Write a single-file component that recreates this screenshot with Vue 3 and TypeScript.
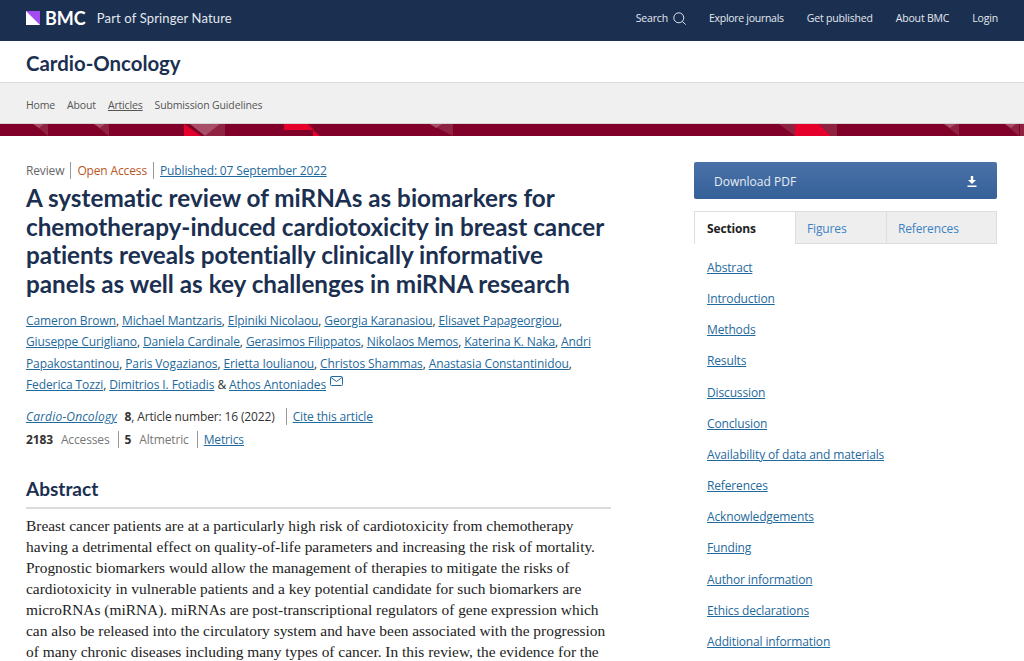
<template>
  <div class="page">
    <header class="topbar">
      <div class="brand">
        <svg class="logo" width="14" height="14" viewBox="0 0 14 14">
          <rect width="14" height="14" fill="#a24bf0" />
          <polygon points="0,0 14,14 0,14" fill="#fff" />
        </svg>
        <span class="bmc">BMC</span>
        <span class="part">Part of Springer Nature</span>
      </div>
      <nav class="topnav">
        <a class="search">Search
          <svg width="13" height="13" viewBox="0 0 13 13" fill="none" stroke="#dfe5ec" stroke-width="1">
            <circle cx="5.8" cy="5.8" r="5" />
            <path d="M9.4 9.4 12.6 12.6" />
          </svg>
        </a>
        <a class="explore">Explore journals</a>
        <a>Get published</a>
        <a>About BMC</a>
        <a>Login</a>
      </nav>
    </header>

    <div class="journal">Cardio-Oncology</div>

    <nav class="subnav">
      <a>Home</a>
      <a>About</a>
      <a class="current">Articles</a>
      <a>Submission Guidelines</a>
    </nav>

    <div class="strip">
      <svg width="1024" height="12" viewBox="0 0 1024 12">
        <polygon v-for="(p, i) in stripShapes" :key="i" :points="p.points" :fill="p.fill" />
      </svg>
    </div>

    <main class="content">
      <article class="article">
        <div class="meta-top">
          <span class="type">Review</span>
          <span class="oa">Open Access</span>
          <a class="link">Published: 07 September 2022</a>
        </div>
        <h1>A systematic review of miRNAs as biomarkers for chemotherapy-induced cardiotoxicity in breast cancer patients reveals potentially clinically informative panels as well as key challenges in miRNA research</h1>
        <p class="authors">
          <template v-for="(a, i) in authors" :key="a">
            <a class="link">{{ a }}</a><span v-if="i < authors.length - 2">, </span><span v-else-if="i === authors.length - 2"> &amp; </span>
          </template>
          <svg class="mail" width="13" height="10" viewBox="0 0 13 10" fill="none" stroke="#1f6a9c" stroke-width="1">
            <rect x="0.5" y="0.5" width="12" height="9" rx="1" />
            <path d="M1 1.5 6.5 5.5 12 1.5" />
          </svg>
        </p>
        <div class="cite">
          <span><a class="link italic">Cardio-Oncology</a><b class="vol">8</b>, Article number: 16 (2022)</span>
          <a class="link">Cite this article</a>
        </div>
        <div class="metrics">
          <span><b>2183</b><i>Accesses</i></span>
          <span><b>5</b><i>Altmetric</i></span>
          <a class="link">Metrics</a>
        </div>
        <h2>Abstract</h2>
        <p class="abstract">Breast cancer patients are at a particularly high risk of cardiotoxicity from chemotherapy having a detrimental effect on quality-of-life parameters and increasing the risk of mortality. Prognostic biomarkers would allow the management of therapies to mitigate the risks of cardiotoxicity in vulnerable patients and a key potential candidate for such biomarkers are microRNAs (miRNA). miRNAs are post-transcriptional regulators of gene expression which can also be released into the circulatory system and have been associated with the progression of many chronic diseases including many types of cancer. In this review, the evidence for the</p>
      </article>

      <aside class="side">
        <a class="pdf">Download PDF
          <svg width="10" height="11" viewBox="0 0 10 11" fill="#fff">
            <path d="M3.8 0h2.4v4H9L5 8 1 4h2.8zM0.5 9.5h9V11h-9z" />
          </svg>
        </a>
        <div class="tabs">
          <div class="tab active">Sections</div>
          <div class="tab figures">Figures</div>
          <div class="tab refs">References</div>
        </div>
        <ul class="sections">
          <li v-for="s in sections" :key="s"><a class="link">{{ s }}</a></li>
        </ul>
      </aside>
    </main>
  </div>
</template>

<script setup lang="ts">
const authors: string[] = [
  'Cameron Brown', 'Michael Mantzaris', 'Elpiniki Nicolaou', 'Georgia Karanasiou', 'Elisavet Papageorgiou',
  'Giuseppe Curigliano', 'Daniela Cardinale', 'Gerasimos Filippatos', 'Nikolaos Memos', 'Katerina K. Naka',
  'Andri Papakostantinou', 'Paris Vogazianos', 'Erietta Ioulianou', 'Christos Shammas', 'Anastasia Constantinidou',
  'Federica Tozzi', 'Dimitrios I. Fotiadis', 'Athos Antoniades'
]

const sections: string[] = [
  'Abstract', 'Introduction', 'Methods', 'Results', 'Discussion', 'Conclusion',
  'Availability of data and materials', 'References', 'Acknowledgements', 'Funding',
  'Author information', 'Ethics declarations', 'Additional information'
]

const light = '#8f2141'
const red = '#e4002b'
const pale = '#a84e68'

const stripShapes = [
  { points: '34,0 48,0 48,12', fill: light },
  { points: '33,0 44,0 39,4', fill: pale },
  { points: '94,0 109,0 109,12', fill: light },
  { points: '94,0 105,0 100,4', fill: pale },
  { points: '184,0 184,12 201,12', fill: red },
  { points: '220,0 225,0 225,12 205,12', fill: light },
  { points: '190,0 220,0 205,12', fill: pale },
  { points: '284,0 308,0 314,6 284,6', fill: red },
  { points: '313,6 320,12 313,12', fill: red },
  { points: '430,0 453,0 453,12', fill: light },
  { points: '430,0 442,0 436,4', fill: pale },
  { points: '779,0 795,0 795,12', fill: light },
  { points: '795,0 819,0 831,12 795,12', fill: red },
  { points: '819,0 837,0 837,12 831,12', fill: light },
  { points: '944,0 959,0 959,12', fill: light },
  { points: '944,0 956,0 950,4', fill: pale },
  { points: '1005,0 1019,0 1019,12', fill: light },
  { points: '1005,0 1016,0 1011,4', fill: pale },
  { points: '1020,0 1024,0 1024,12 1020,12', fill: light }
]
</script>

<style scoped>
.page {
  width: 1024px;
  height: 661px;
  overflow: hidden;
  background: #fff;
  font-family: "Open Sans", "Liberation Sans", sans-serif;
  color: #333;
}

.topbar {
  height: 41px;
  background: #1b3051;
  color: #e3e8ee;
  display: flex;
  align-items: center;
  justify-content: space-between;
  padding: 0 26px 5px;
  box-sizing: border-box;
  font-size: 10.5px;
  letter-spacing: -0.18px;
}

.brand {
  display: flex;
  align-items: center;
  letter-spacing: 0;
}

.logo {
  margin-right: 5px;
}

.bmc {
  font-family: Lato, sans-serif;
  font-weight: 700;
  font-size: 18px;
  color: #fff;
  margin-right: 11px;
}

.part {
  font-family: Lato, sans-serif;
  font-size: 13px;
  letter-spacing: 0.15px;
}

.topnav {
  display: flex;
  align-items: center;
  gap: 23px;
}

.search {
  display: flex;
  align-items: center;
  gap: 5px;
}

.explore {
  letter-spacing: -0.28px;
}

.journal {
  height: 42px;
  box-sizing: border-box;
  padding: 10px 26px 0;
  font-family: Lato, sans-serif;
  font-weight: 700;
  font-size: 20.4px;
  color: #1b3051;
  border-bottom: 1px solid #dcdcdc;
}

.subnav {
  height: 41px;
  background: #f0f0f0;
  display: flex;
  align-items: center;
  gap: 12px;
  padding: 4px 26px 0;
  font-size: 10.5px;
  letter-spacing: -0.15px;
  color: #555;
  border-bottom: 1px solid #d5d5d5;
  box-sizing: border-box;
}

.current {
  text-decoration: underline;
}

.strip {
  height: 12px;
  background: #800029;
  line-height: 0;
}

.content {
  display: flex;
  padding: 26px 26px 0;
  font-size: 12px;
  letter-spacing: -0.14px;
}

.article {
  width: 585px;
  margin-right: 83px;
}

.side {
  width: 303px;
}

.link {
  color: #1f6a9c;
  text-decoration: underline;
}

.italic {
  font-style: italic;
  letter-spacing: 0.18px;
}

.vol {
  margin-left: 7.5px;
}

.meta-top {
  display: flex;
  align-items: center;
  line-height: 17px;
}

.type {
  color: #666;
  padding-right: 6px;
  border-right: 1px solid #999;
}

.oa {
  color: #b8561f;
  padding: 0 6px;
  border-right: 1px solid #999;
  margin-right: 6px;
}

h1 {
  font-family: Lato, sans-serif;
  font-variant-ligatures: none;
  font-weight: 700;
  font-size: 24.25px;
  line-height: 28.5px;
  letter-spacing: 0;
  color: #1b3051;
  margin: 5px 0 12px;
}

.authors {
  line-height: 21.3px;
  letter-spacing: -0.1px;
  margin: 0 0 13px;
}

.mail {
  margin-left: 4px;
  vertical-align: 3px;
}

.cite,
.metrics {
  display: flex;
  line-height: 17px;
  align-items: center;
}

.cite > span {
  padding-right: 11px;
  border-right: 1px solid #999;
  margin-right: 6px;
}

.metrics {
  margin-top: 6px;
}

.metrics > span {
  padding-right: 8px;
  border-right: 1px solid #999;
  margin-right: 6px;
}

.metrics i {
  font-style: normal;
  color: #777;
  margin-left: 8px;
}

h2 {
  font-family: Lato, sans-serif;
  font-weight: 700;
  font-size: 19px;
  line-height: 26px;
  letter-spacing: 0;
  color: #1b3051;
  margin: 28px 0 0;
  padding-bottom: 5px;
  border-bottom: 2px solid #dcdcdc;
}

.abstract {
  font-family: "Liberation Serif", serif;
  font-size: 15.42px;
  letter-spacing: 0;
  line-height: 21px;
  margin: 6px 0 0;
  color: #222;
}

.pdf {
  height: 37px;
  box-sizing: border-box;
  display: flex;
  align-items: center;
  justify-content: space-between;
  padding: 1px 20px 0;
  background: linear-gradient(#4a72a8, #346098);
  border-radius: 2px;
  color: #e8edf3;
  letter-spacing: 0;
}

.tabs {
  display: flex;
  margin-top: 12px;
  height: 33px;
}

.tab {
  background: #eee;
  border: 1px solid #ddd;
  border-left: 0;
  padding-left: 11px;
  color: #3b82c4;
  line-height: 33px;
  box-sizing: border-box;
}

.tab.active {
  width: 102px;
  padding-left: 12px;
  background: #fff;
  border-bottom: 0;
  border-left: 1px solid #ddd;
  color: #222;
  font-weight: 700;
}

.tab.figures {
  width: 91px;
}

.tab.refs {
  width: 110px;
}

.sections {
  list-style: none;
  margin: 0;
  padding: 8px 0 0 13px;
}

.sections li {
  height: 31.17px;
  line-height: 31.17px;
}
</style>
